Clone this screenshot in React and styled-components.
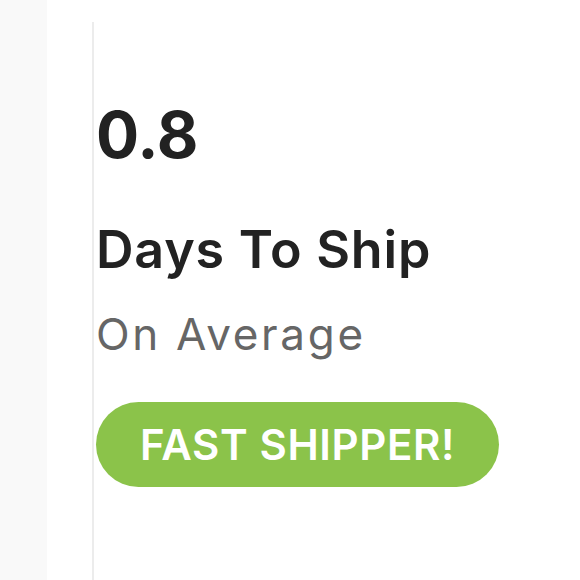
import React from "react";
import styled, { createGlobalStyle } from "styled-components";

const Global = createGlobalStyle`
  html, body {
    margin: 0;
    padding: 0;
    background: #fff;
  }
  body {
    font-family: Inter, "Open Sans", sans-serif;
  }
`;

const Page = styled.div`
  display: flex;
  width: 580px;
  height: 580px;
  overflow: hidden;
`;

const Gutter = styled.div`
  width: 47px;
  flex-shrink: 0;
  background: #f9f9f9;
`;

const Spacer = styled.div`
  width: 45px;
  flex-shrink: 0;
`;

const Panel = styled.div`
  margin-top: 22px;
  border-left: 2px solid #ececec;
  padding-left: 2px;
  flex: 1;
  display: flex;
  flex-direction: column;
  align-items: flex-start;
`;

const Stat = styled.div`
  margin-top: 81px;
  font-size: 64px;
  font-weight: 700;
  color: #222;
  line-height: 1;
`;

const Title = styled.div`
  margin-top: 57px;
  font-size: 52px;
  font-weight: 600;
  color: #222;
  line-height: 1;
  letter-spacing: 0.8px;
`;

const Sub = styled.div`
  margin-top: 36px;
  font-size: 44px;
  font-weight: 400;
  color: #666;
  line-height: 1;
  letter-spacing: 2.7px;
`;

const Badge = styled.div`
  margin-top: 46px;
  width: 403px;
  height: 85px;
  border-radius: 43px;
  background: #8bc34a;
  color: #fff;
  font-size: 42px;
  font-weight: 600;
  letter-spacing: 0.6px;
  display: flex;
  align-items: center;
  justify-content: center;
`;

export default function App() {
  return (
    <>
      <Global />
      <Page>
        <Gutter />
        <Spacer />
        <Panel>
          <Stat>0.8</Stat>
          <Title>Days To Ship</Title>
          <Sub>On Average</Sub>
          <Badge>FAST SHIPPER!</Badge>
        </Panel>
      </Page>
    </>
  );
}
